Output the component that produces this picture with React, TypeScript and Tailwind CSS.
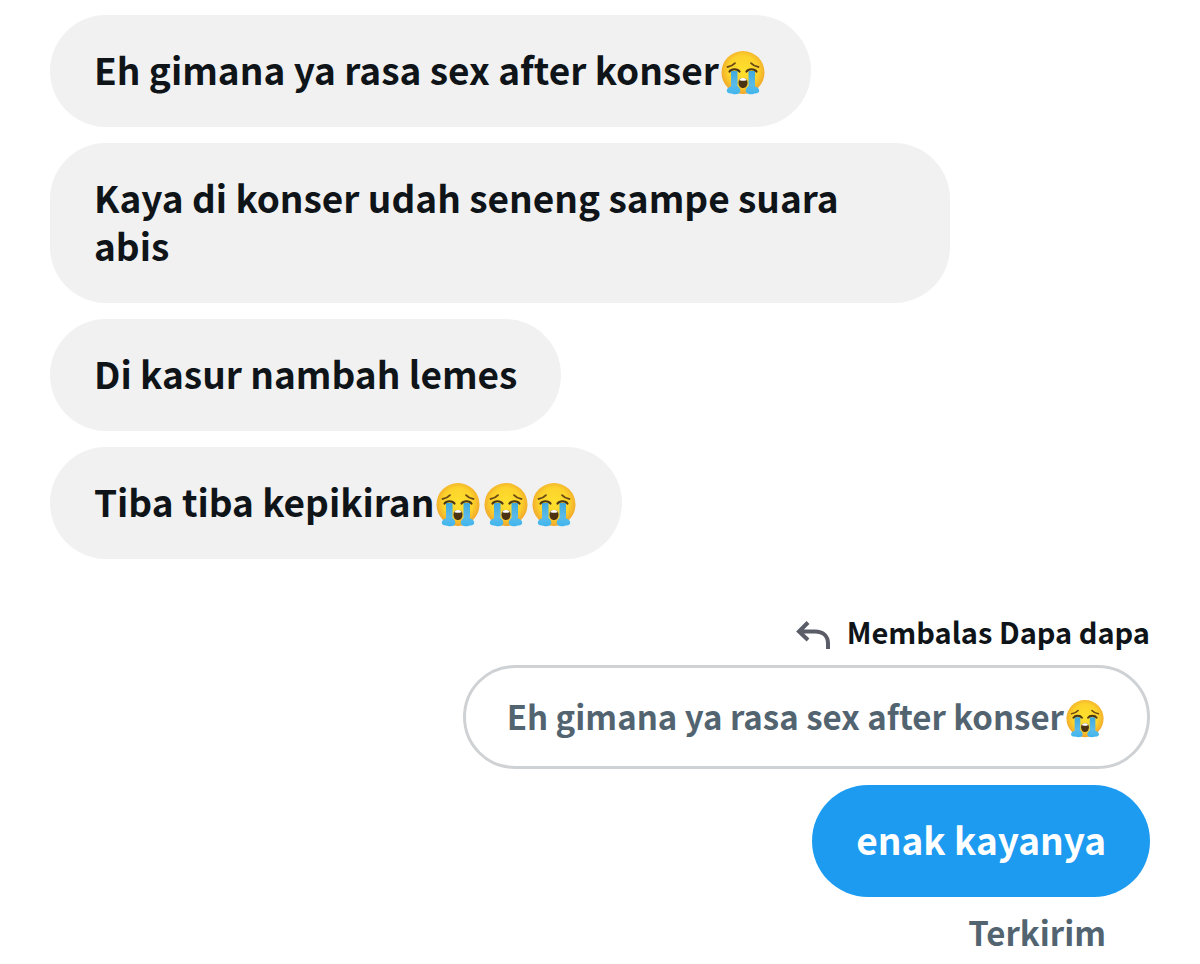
import { useId } from "react";

function CryingFace({ className }: { className: string }) {
  const id = useId();
  return (
    <svg viewBox="0 0 44 44" role="img" aria-label="😭" className={className}>
      <defs>
        <radialGradient id={id + "f"} cx="50%" cy="46%" r="54%">
          <stop offset="0" stopColor="#ffe02e" />
          <stop offset="0.65" stopColor="#fcd22b" />
          <stop offset="1" stopColor="#f0a52c" />
        </radialGradient>
        <linearGradient id={id + "t"} x1="0" y1="0" x2="0" y2="1">
          <stop offset="0" stopColor="#3fa9dc" />
          <stop offset="0.6" stopColor="#5bbbe8" />
          <stop offset="1" stopColor="#3fb5ee" />
        </linearGradient>
      </defs>
      <circle cx="22" cy="21.500" r="21.500" fill={`url(#${id}f)`} />
      <path d="M6.500 16c3-.4 5.500-1.600 7.500-3.800M37.500 16c-3-.4-5.500-1.600-7.500-3.800" fill="none" stroke="#6b4a16" strokeWidth="1.800" strokeLinecap="round" />
      <path d="M17.500 31.500c0-3.200 1.700-4.500 4.500-4.500s4.500 1.300 4.500 4.500c0 3.400-1.800 5.500-4.500 5.500s-4.500-2.100-4.500-5.500z" fill="#4b3212" />
      <path d="M18.300 29c.7-1.500 2-2 3.700-2s3 .5 3.700 2c-.5.600-1.600.8-3.700.8s-3.200-.2-3.700-.8z" fill="#fff" />
      <path d="M10 20h6.500v15c1.800 1.200 2.800 3 2.800 5 0 2-2 3.200-5 3.200-2 0-3-.5-4-.8-2.500.2-4.500-.8-4.500-2.700 0-2 1.800-3.700 4.200-4.200z" fill={`url(#${id}t)`} />
      <path d="M34 20h-6.500v15c-1.800 1.200-2.800 3-2.800 5 0 2 2 3.200 5 3.200 2 0 3-.5 4-.8 2.500.2 4.500-.8 4.500-2.700 0-2-1.800-3.700-4.200-4.200z" fill={`url(#${id}t)`} />
      <path d="M8.500 20.500c2-3 8-3 10 0M35.500 20.500c-2-3-8-3-10 0" fill="none" stroke="#4b3514" strokeWidth="2.200" strokeLinecap="round" />
    </svg>
  );
}

const received = [
  { text: "Eh gimana ya rasa sex after konser", faces: 1 },
  { text: "Kaya di konser udah seneng sampe suara abis", faces: 0 },
  { text: "Di kasur nambah lemes", faces: 0 },
  { text: "Tiba tiba kepikiran", faces: 3 },
];

export default function App() {
  return (
    <main className="flex min-h-screen flex-col bg-white px-[50px] pt-[15px] font-['Noto_Sans_CJK_JP',sans-serif] font-bold text-[#0f1419]">
      <ul className="flex max-w-[900px] flex-col items-start gap-4">
        {received.map((m) => (
          <li key={m.text} className="rounded-[56px] bg-[#f1f1f1] px-11 pt-[30px] pb-[34px] text-[37px] leading-[48px]">
            {m.text}
            {Array.from({ length: m.faces }, (_, i) => (
              <CryingFace key={i} className="mx-[2px] -mt-3 -mb-2 inline-block size-11 align-middle" />
            ))}
          </li>
        ))}
      </ul>

      <section className="mt-[52px] flex flex-col items-end">
        <p className="flex items-center gap-4 text-[29px] leading-10">
          <svg viewBox="0 0 36 30" aria-hidden="true" className="mt-2 h-[30px] w-9 fill-none stroke-[#5a5d68] stroke-4">
            <path d="M13 2.500 4 11.500l9 8.500M4 11.500H20c8 0 13 4.500 13 12V29" />
          </svg>
          Membalas Dapa dapa
        </p>
        <blockquote className="mt-3.5 rounded-full border-3 border-[#cfd2d5] px-[41px] pt-6 pb-[26px] text-[33px] leading-[48px] text-[#536471]">
          Eh gimana ya rasa sex after konser
          <CryingFace className="mx-[2px] -mt-3 -mb-2 inline-block size-[38px] align-middle" />
        </blockquote>
        <p className="mt-4 rounded-[56px] bg-[#1d9bf0] px-11 pt-[30px] pb-[34px] text-[37px] leading-[48px] text-white">enak kayanya</p>
        <p className="mt-3 pr-11 text-[33px] leading-[46px] text-[#536471]">Terkirim</p>
      </section>
    </main>
  );
}
